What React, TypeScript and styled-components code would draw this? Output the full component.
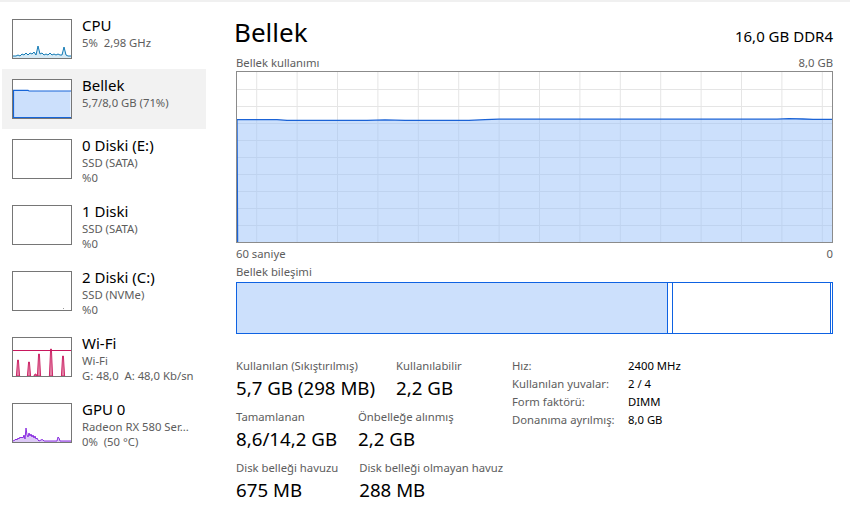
import React from "react";
import styled, { createGlobalStyle } from "styled-components";

const Global = createGlobalStyle`
  html, body { margin: 0; padding: 0; background: #fff; }
  body { font-family: "Noto Sans", "Open Sans", sans-serif; color: #000; }
  * { box-sizing: border-box; }
`;

const Window = styled.div`
  width: 850px;
  height: 521px;
  display: flex;
  flex-direction: column;
  background: #fff;
  overflow: hidden;
`;
const TopStrip = styled.div`
  height: 2px;
  flex: none;
  background: #f0f0f0;
`;
const Body = styled.div`
  flex: 1;
  display: flex;
  min-height: 0;
`;
const Sidebar = styled.nav`
  width: 206px;
  flex: none;
  padding-top: 7px;
  display: flex;
  flex-direction: column;
`;
const Item = styled.div<{ $selected?: boolean }>`
  margin-left: 2px;
  display: flex;
  gap: 10px;
  padding: 6px 0 10px 10px;
  background: ${(p) => (p.$selected ? "#f2f2f2" : "transparent")};
`;
const Thumb = styled.div`
  width: 60px;
  height: 40px;
  flex: none;
  margin-top: 4px;
  border: 1px solid #767676;
  background: #fff;
  svg { display: block; }
`;
const ItemText = styled.div`
  display: flex;
  flex-direction: column;
  min-width: 0;
`;
const ItemTitle = styled.div`
  font-size: 15px;
  line-height: 20px;
  white-space: nowrap;
`;
const ItemSub = styled.div`
  font-size: 11.3px;
  line-height: 15px;
  color: #5d5d5d;
  white-space: pre;
`;

const Main = styled.main`
  flex: 1;
  min-width: 0;
  padding: 13px 17px 0 30px;
  display: flex;
  flex-direction: column;
`;
const Header = styled.div`
  display: flex;
  justify-content: space-between;
  align-items: baseline;
`;
const Title = styled.h1`
  margin: 0 0 0 -2px;
  font-size: 26px;
  line-height: 34px;
  font-weight: 400;
`;
const Spec = styled.div`
  font-size: 15px;
  line-height: 20px;
`;
const Caption = styled.div<{ $mt: number; $mb?: number }>`
  display: flex;
  justify-content: space-between;
  margin-top: ${(p) => p.$mt}px;
  margin-bottom: ${(p) => p.$mb ?? 0}px;
  font-size: 11.3px;
  line-height: 15px;
  color: #5d5d5d;
`;
const Chart = styled.div`
  height: 172px;
  flex: none;
  border: 1px solid #8b8b8b;
  background: #fff;
  svg { display: block; }
`;
const Comp = styled.div`
  margin-top: 3px;
  height: 52px;
  flex: none;
  display: flex;
  border-left: 1px solid #0e62e2;
`;
const Seg = styled.div<{ $w: number; $fill?: boolean }>`
  width: ${(p) => p.$w}px;
  flex: none;
  border: 1px solid #0e62e2;
  border-left: none;
  background: ${(p) => (p.$fill ? "#cce0fc" : "#fff")};
`;
const StatsArea = styled.div`
  margin-top: 23px;
  display: flex;
`;
const LeftStats = styled.div`
  width: 276px;
  flex: none;
  display: flex;
  flex-direction: column;
  gap: 7px;
`;
const StatRow = styled.div`
  display: flex;
  gap: 21px;
`;
const Stat = styled.div`
  display: flex;
  flex-direction: column;
`;
const StatLabel = styled.div`
  font-size: 11.3px;
  line-height: 18px;
  color: #5d5d5d;
  white-space: nowrap;
`;
const StatValue = styled.div`
  font-size: 18.7px;
  line-height: 26px;
  white-space: nowrap;
`;
const InfoGrid = styled.div`
  display: grid;
  grid-template-columns: 116px auto;
  align-content: start;
  font-size: 11.3px;
  line-height: 18px;
`;
const InfoLabel = styled.div`
  color: #5d5d5d;
  white-space: nowrap;
`;
const InfoValue = styled.div`
  color: #000;
  white-space: nowrap;
`;

type Pt = [number, number];
const toLine = (pts: Pt[]) => pts.map((p, i) => `${i ? "L" : "M"}${p[0]},${p[1]}`).join(" ");
const toArea = (pts: Pt[], h: number) =>
  `M${pts[0][0]},${h} ` + pts.map((p) => `L${p[0]},${p[1]}`).join(" ") + ` L${pts[pts.length - 1][0]},${h} Z`;

const cpuPts: Pt[] = [
  [0, 36], [3, 36], [5, 35], [7, 36], [9, 34], [11, 35], [13, 33], [15, 35], [17, 33], [19, 34],
  [21, 32], [23, 35], [25, 26], [27, 34], [29, 33], [31, 35], [33, 34], [35, 35], [37, 33], [39, 35],
  [41, 34], [43, 35], [45, 34], [47, 35], [49, 35], [51, 27], [53, 35], [55, 36], [58, 36],
];
const CpuThumb = () => (
  <svg width="58" height="38" viewBox="0 0 58 38">
    <path d={toArea(cpuPts, 38)} fill="#d6eaf5" />
    <path d={toLine(cpuPts)} fill="none" stroke="#137ab5" strokeWidth="1" />
  </svg>
);

const MemThumb = () => (
  <svg width="58" height="38" viewBox="0 0 58 38">
    <path d="M0.5,37.5 L0.5,10.3 L15,10.3 L16,11 L57.5,11 L57.5,37.5 Z" fill="#cce0fc" />
    <path d="M0.5,37.5 L0.5,10.3 L15,10.3 L16,11 L58,11 M0,37.5 L58,37.5" fill="none" stroke="#1665d8" strokeWidth="1.2" />
  </svg>
);

const EmptyThumb = ({ dot }: { dot?: boolean }) => (
  <svg width="58" height="38" viewBox="0 0 58 38">
    {dot && <rect x="50" y="36" width="1" height="1" fill="#9a9a9a" />}
  </svg>
);

const wifiSpikes: Pt[] = [[5, 16], [16, 14], [22.5, 2], [26, 22], [38, 27], [50, 20]];
const WifiThumb = () => (
  <svg width="58" height="38" viewBox="0 0 58 38">
    <line x1="0" y1="12.5" x2="58" y2="12.5" stroke="#c8175d" strokeWidth="1.2" />
    {wifiSpikes.map(([x, h], i) => (
      <path
        key={i}
        d={`M${x - 1.6},38 L${x - 0.4},${38 - h} L${x + 0.4},${38 - h} L${x + 1.6},38 Z`}
        fill="#e486a8"
        stroke="#c8175d"
        strokeWidth="0.9"
      />
    ))}
  </svg>
);

const gpuPts: Pt[] = [
  [0, 37], [2, 36], [3, 35], [4, 36], [5, 34], [6, 35], [7, 33], [8, 34], [9, 33], [10, 34], [11, 31],
  [12, 35], [13, 24], [14, 31], [15, 33], [16, 29], [17, 32], [18, 30], [19, 33], [20, 31], [21, 34],
  [22, 32], [23, 35], [24, 34], [25, 36], [26, 37], [28, 36], [29, 35.5], [30, 36], [31, 37], [36, 37],
  [44, 37], [45, 33], [46, 34], [47, 37], [58, 37],
];
const GpuThumb = () => (
  <svg width="58" height="38" viewBox="0 0 58 38">
    <path d={toArea(gpuPts, 38)} fill="#dcc8f6" />
    <path d={toLine(gpuPts)} fill="none" stroke="#8a2ee0" strokeWidth="1" />
  </svg>
);

const CW = 595;
const CH = 170;
const memLine: Pt[] = [
  [0, 47.6], [40, 47.6], [50, 48.3], [130, 48.4], [148, 47.8], [168, 48.4], [232, 48.4], [248, 47.6],
  [262, 47.2], [540, 47.2], [552, 46.6], [566, 47.0], [576, 47.3], [595, 47.3],
];
const MemoryChart = () => {
  const vx = Array.from({ length: 15 }, (_, i) => 19.7 + i * 40.4);
  const hy = Array.from({ length: 9 }, (_, i) => 17 * (i + 1));
  const linePath = `M0.6,${CH} ` + memLine.map((p) => `L${p[0]},${p[1]}`).join(" ");
  return (
    <svg width={CW} height={CH} viewBox={`0 0 ${CW} ${CH}`}>
      {vx.map((x) => (
        <line key={"v" + x} x1={x} y1={0} x2={x} y2={CH} stroke="#e5e5e5" strokeWidth="1" />
      ))}
      {hy.map((y) => (
        <line key={"h" + y} x1={0} y1={y + 0.5} x2={CW} y2={y + 0.5} stroke="#e5e5e5" strokeWidth="1" />
      ))}
      <path d={toArea(memLine, CH)} fill="rgb(153,193,249)" fillOpacity="0.5" />
      <path d={linePath} fill="none" stroke="#1b63d6" strokeWidth="1.3" />
    </svg>
  );
};

type SideEntry = { title: string; subs: string[]; thumb: React.ReactNode; selected?: boolean };
const entries: SideEntry[] = [
  { title: "CPU", subs: ["5%  2,98 GHz"], thumb: <CpuThumb /> },
  { title: "Bellek", subs: ["5,7/8,0 GB (71%)"], thumb: <MemThumb />, selected: true },
  { title: "0 Diski (E:)", subs: ["SSD (SATA)", "%0"], thumb: <EmptyThumb /> },
  { title: "1 Diski", subs: ["SSD (SATA)", "%0"], thumb: <EmptyThumb /> },
  { title: "2 Diski (C:)", subs: ["SSD (NVMe)", "%0"], thumb: <EmptyThumb dot /> },
  { title: "Wi-Fi", subs: ["Wi-Fi", "G: 48,0  A: 48,0 Kb/sn"], thumb: <WifiThumb /> },
  { title: "GPU 0", subs: ["Radeon RX 580 Ser...", "0%  (50 °C)"], thumb: <GpuThumb /> },
];

const statRows: { label: string; value: string }[][] = [
  [
    { label: "Kullanılan (Sıkıştırılmış)", value: "5,7 GB (298 MB)" },
    { label: "Kullanılabilir", value: "2,2 GB" },
  ],
  [
    { label: "Tamamlanan", value: "8,6/14,2 GB" },
    { label: "Önbelleğe alınmış", value: "2,2 GB" },
  ],
  [
    { label: "Disk belleği havuzu", value: "675 MB" },
    { label: "Disk belleği olmayan havuz", value: "288 MB" },
  ],
];

const info: [string, string][] = [
  ["Hız:", "2400 MHz"],
  ["Kullanılan yuvalar:", "2 / 4"],
  ["Form faktörü:", "DIMM"],
  ["Donanıma ayrılmış:", "8,0 GB"],
];

export default function App() {
  return (
    <>
      <Global />
      <Window>
        <TopStrip />
        <Body>
          <Sidebar>
            {entries.map((e) => (
              <Item key={e.title} $selected={e.selected}>
                <Thumb>{e.thumb}</Thumb>
                <ItemText>
                  <ItemTitle>{e.title}</ItemTitle>
                  {e.subs.map((s) => (
                    <ItemSub key={s}>{s}</ItemSub>
                  ))}
                </ItemText>
              </Item>
            ))}
          </Sidebar>
          <Main>
            <Header>
              <Title>Bellek</Title>
              <Spec>16,0 GB DDR4</Spec>
            </Header>
            <Caption $mt={6} $mb={1}>
              <span>Bellek kullanımı</span>
              <span>8,0 GB</span>
            </Caption>
            <Chart>
              <MemoryChart />
            </Chart>
            <Caption $mt={3}>
              <span>60 saniye</span>
              <span>0</span>
            </Caption>
            <Caption $mt={3}>
              <span>Bellek bileşimi</span>
            </Caption>
            <Comp>
              <Seg $w={431} $fill />
              <Seg $w={5} />
              <Seg $w={158} />
              <Seg $w={2} />
            </Comp>
            <StatsArea>
              <LeftStats>
                {statRows.map((row, i) => (
                  <StatRow key={i}>
                    {row.map((s) => (
                      <Stat key={s.label}>
                        <StatLabel>{s.label}</StatLabel>
                        <StatValue>{s.value}</StatValue>
                      </Stat>
                    ))}
                  </StatRow>
                ))}
              </LeftStats>
              <InfoGrid>
                {info.map(([l, v]) => (
                  <React.Fragment key={l}>
                    <InfoLabel>{l}</InfoLabel>
                    <InfoValue>{v}</InfoValue>
                  </React.Fragment>
                ))}
              </InfoGrid>
            </StatsArea>
          </Main>
        </Body>
      </Window>
    </>
  );
}
